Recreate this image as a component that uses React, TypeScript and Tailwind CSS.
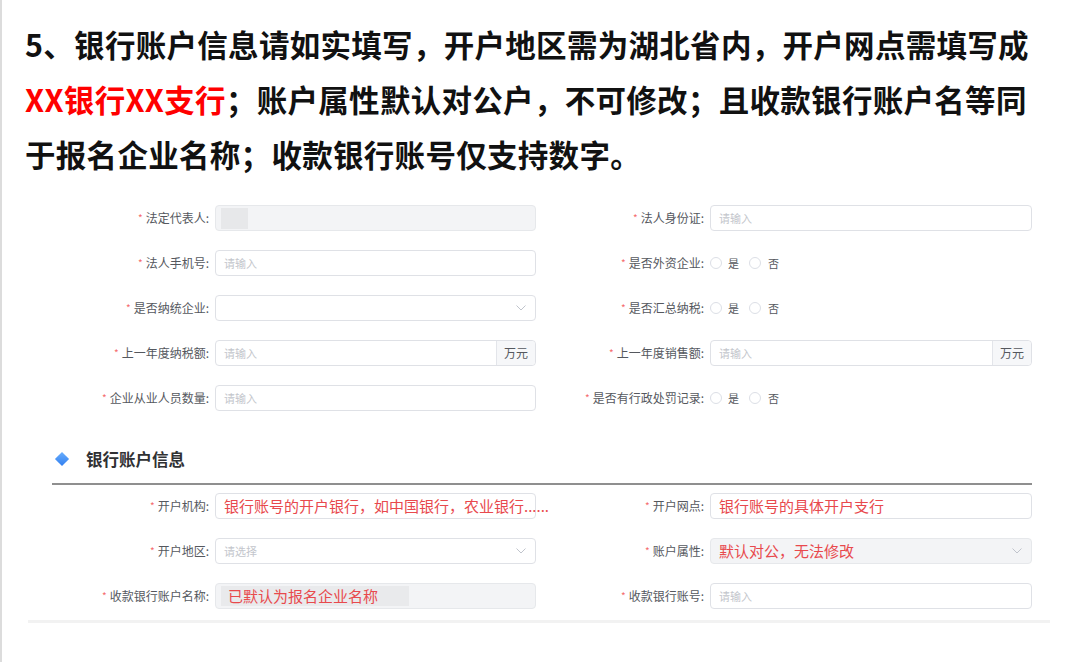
import React from 'react';

const cjk = { fontFamily: '"Noto Sans CJK SC", "Noto Sans", sans-serif' };

function Label({ text }: { text: string }) {
    return (
        <div className="whitespace-nowrap text-[12px] leading-[26px] text-[#55585e] flex items-center">
            <span className="text-[#f56c6c] text-[10px] mr-[3px]">*</span>
            <span>{text}:</span>
        </div>
    );
}

function Chevron() {
    return (
        <svg width="10" height="6" viewBox="0 0 10 6" className="shrink-0">
            <path d="M0.5 0.5 L5 5 L9.5 0.5" fill="none" stroke="#c0c4cc" strokeWidth="1" />
        </svg>
    );
}

type BoxProps = {
    width: string;
    placeholder?: string;
    disabled?: boolean;
    select?: boolean;
    append?: string;
    children?: React.ReactNode;
};

function Box({ width, placeholder, disabled, select, append, children }: BoxProps) {
    return (
        <div
            className={`${width} ml-[6px] h-[26px] rounded-[4px] border flex items-center relative ${
                disabled ? 'bg-[#f3f4f6] border-[#e6e8eb]' : 'bg-white border-[#dfe1e6]'
            }`}
        >
            <div className="flex-1 flex items-center pl-[8px] h-full">
                {placeholder && <span className="text-[11px] text-[#c3c6cc]">{placeholder}</span>}
                {children}
            </div>
            {select && (
                <div className="pr-[9px] flex items-center">
                    <Chevron />
                </div>
            )}
            {append && (
                <div className="h-full w-[39px] border-l border-[#e3e5ea] bg-[#f6f7f9] rounded-r-[4px] flex items-center justify-center text-[12px] text-[#55585e]">
                    {append}
                </div>
            )}
        </div>
    );
}

function Radios() {
    return (
        <div className="ml-[6px] w-[322px] h-[26px] flex items-center text-[11px] text-[#55585e]">
            <span className="w-[12px] h-[12px] rounded-full border border-[#dcdfe6] bg-white" />
            <span className="ml-[6px]">是</span>
            <span className="ml-[10px] w-[12px] h-[12px] rounded-full border border-[#dcdfe6] bg-white" />
            <span className="ml-[7px]">否</span>
        </div>
    );
}

function Row({ left, right }: { left: React.ReactNode; right: React.ReactNode }) {
    return (
        <div className="flex h-[26px]">
            <div className="w-[534px] flex items-center justify-end">{left}</div>
            <div className="w-[496px] flex items-center justify-end">{right}</div>
        </div>
    );
}

function Red({ children }: { children: React.ReactNode }) {
    return <span className="whitespace-nowrap text-[15px] leading-[20px] text-[#e8494d]">{children}</span>;
}

export default function App() {
    return (
        <div className="h-[662px] w-[1080px] bg-white border-l-2 border-[#dcdcdc] overflow-hidden" style={cjk}>
            <div className="pl-[23px] pt-[17px] text-[30.5px] tracking-[0.3px] font-bold leading-[55px] text-[#111] whitespace-nowrap">
                <div>5、银行账户信息请如实填写，开户地区需为湖北省内，开户网点需填写成</div>
                <div>
                    <span className="text-[#ff0000]">XX银行XX支行</span>；账户属性默认对公户，不可修改；且收款银行账户名等同
                </div>
                <div>于报名企业名称；收款银行账号仅支持数字。</div>
            </div>

            <div className="mt-[23px] flex flex-col gap-[19px]">
                <Row
                    left={
                        <>
                            <Label text="法定代表人" />
                            <Box width="w-[321px]" disabled>
                                <div className="w-[27px] h-[21px] bg-[#e7e8ea] -ml-[3px]" />
                            </Box>
                        </>
                    }
                    right={
                        <>
                            <Label text="法人身份证" />
                            <Box width="w-[322px]" placeholder="请输入" />
                        </>
                    }
                />
                <Row
                    left={
                        <>
                            <Label text="法人手机号" />
                            <Box width="w-[321px]" placeholder="请输入" />
                        </>
                    }
                    right={
                        <>
                            <Label text="是否外资企业" />
                            <Radios />
                        </>
                    }
                />
                <Row
                    left={
                        <>
                            <Label text="是否纳统企业" />
                            <Box width="w-[321px]" select />
                        </>
                    }
                    right={
                        <>
                            <Label text="是否汇总纳税" />
                            <Radios />
                        </>
                    }
                />
                <Row
                    left={
                        <>
                            <Label text="上一年度纳税额" />
                            <Box width="w-[321px]" placeholder="请输入" append="万元" />
                        </>
                    }
                    right={
                        <>
                            <Label text="上一年度销售额" />
                            <Box width="w-[322px]" placeholder="请输入" append="万元" />
                        </>
                    }
                />
                <Row
                    left={
                        <>
                            <Label text="企业从业人员数量" />
                            <Box width="w-[321px]" placeholder="请输入" />
                        </>
                    }
                    right={
                        <>
                            <Label text="是否有行政处罚记录" />
                            <Radios />
                        </>
                    }
                />
            </div>

            <div className="mt-[36px] ml-[50px] h-[24px] flex items-center">
                <span className="w-[10px] h-[10px] rotate-45 bg-gradient-to-br from-[#6aaefc] to-[#2f7ef0] ml-[5px]" />
                <span className="ml-[19px] text-[16.5px] font-bold text-[#303133] leading-[24px]">银行账户信息</span>
            </div>
            <div className="mt-[12px] ml-[50px] w-[980px] h-[2px] bg-[#8f8f8f]" />

            <div className="mt-[8px] flex flex-col gap-[19px]">
                <Row
                    left={
                        <>
                            <Label text="开户机构" />
                            <Box width="w-[321px]">
                                <Red>银行账号的开户银行，如中国银行，农业银行......</Red>
                            </Box>
                        </>
                    }
                    right={
                        <>
                            <Label text="开户网点" />
                            <Box width="w-[322px]">
                                <Red>银行账号的具体开户支行</Red>
                            </Box>
                        </>
                    }
                />
                <Row
                    left={
                        <>
                            <Label text="开户地区" />
                            <Box width="w-[321px]" placeholder="请选择" select />
                        </>
                    }
                    right={
                        <>
                            <Label text="账户属性" />
                            <Box width="w-[322px]" disabled select>
                                <Red>默认对公，无法修改</Red>
                            </Box>
                        </>
                    }
                />
                <Row
                    left={
                        <>
                            <Label text="收款银行账户名称" />
                            <Box width="w-[321px]" disabled>
                                <div className="-ml-[3px] w-[188px] h-[20px] bg-[#e9eaec] flex items-center pl-[7px]">
                                    <Red>已默认为报名企业名称</Red>
                                </div>
                            </Box>
                        </>
                    }
                    right={
                        <>
                            <Label text="收款银行账号" />
                            <Box width="w-[322px]" placeholder="请输入" />
                        </>
                    }
                />
            </div>

            <div className="mt-[11px] ml-[26px] w-[1022px] h-[3px] bg-[#f2f2f2]" />
        </div>
    );
}
